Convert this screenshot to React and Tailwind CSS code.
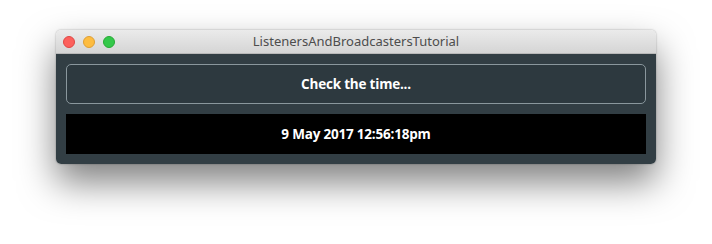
export default function App() {
  return (
    <div className="w-[712px] h-[244px] bg-white overflow-hidden">
      <div className="ml-[56px] mt-[30px] w-[600px] h-[134px] rounded-[5px] overflow-hidden shadow-[0_18px_36px_rgba(0,0,0,0.5),0_0_2px_rgba(0,0,0,0.35)] flex flex-col">
        <div className="relative h-[24px] bg-gradient-to-b from-[#ebebeb] to-[#d5d5d5] border-b border-[#b9b9b9] flex items-center justify-center">
          <div className="absolute left-[7px] top-[6px] flex gap-[8px]">
            <div className="w-[12px] h-[12px] rounded-full bg-[#fc605c] border border-[#df4744]" />
            <div className="w-[12px] h-[12px] rounded-full bg-[#fdbc40] border border-[#de9f34]" />
            <div className="w-[12px] h-[12px] rounded-full bg-[#34c84a] border border-[#27aa35]" />
          </div>
          <span className="text-[13px] text-[#4d4d4d] leading-none" style={{ fontFamily: '"Noto Sans", "Liberation Sans", sans-serif' }}>
            ListenersAndBroadcastersTutorial
          </span>
        </div>
        <div className="flex-1 bg-[#323e44] p-[10px] flex flex-col gap-[10px]" style={{ fontFamily: '"Open Sans", "DejaVu Sans", sans-serif' }}>
          <div className="h-[40px] rounded-[5px] border border-[#8a979d] bg-[#2d393f] flex items-center justify-center text-white text-[13.5px] font-bold tracking-[-0.2px]">
            Check the time...
          </div>
          <div className="h-[40px] bg-black flex items-center justify-center text-white text-[13.5px] font-bold tracking-[-0.2px]">
            9 May 2017 12:56:18pm
          </div>
        </div>
      </div>
    </div>
  );
}
